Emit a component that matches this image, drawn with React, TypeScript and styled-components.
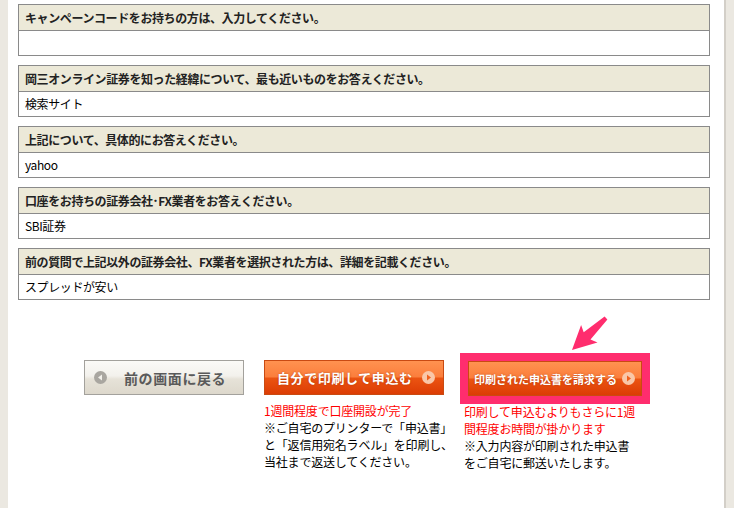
import { FC } from 'react';
import styled, { createGlobalStyle, css } from 'styled-components';

const GlobalStyle = createGlobalStyle`
  html, body {
    margin: 0;
    padding: 0;
    background: #ebe8e1;
  }
  body {
    font-family: "Noto Sans CJK JP", "Liberation Sans", sans-serif;
    font-size: 12px;
    color: #000;
  }
`;

interface IQuestion {
  title: string;
  answer: string;
}

const questions: IQuestion[] = [
  { title: 'キャンペーンコードをお持ちの方は、入力してください。', answer: '' },
  { title: '岡三オンライン証券を知った経緯について、最も近いものをお答えください。', answer: '検索サイト' },
  { title: '上記について、具体的にお答えください。', answer: 'yahoo' },
  { title: '口座をお持ちの証券会社･FX業者をお答えください。', answer: 'SBI証券' },
  { title: '前の質問で上記以外の証券会社、FX業者を選択された方は、詳細を記載ください。', answer: 'スプレッドが安い' },
];

const ArrowIcon: FC<{ dir: 'left' | 'right'; fill: string; tri: string }> = ({ dir, fill, tri }) => (
  <svg width="13" height="13" viewBox="0 0 13 13">
    <circle cx="6.5" cy="6.5" r="6.5" fill={fill} />
    {dir === 'left' ? (
      <polygon points="8,3.5 8,9.5 4,6.5" fill={tri} />
    ) : (
      <polygon points="5,3.5 5,9.5 9,6.5" fill={tri} />
    )}
  </svg>
);

const App: FC = () => (
  <>
    <GlobalStyle />
    <Page>
      <Panel>
        <QuestionList>
          {questions.map((q) => (
            <QuestionBox key={q.title}>
              <QuestionHead>{q.title}</QuestionHead>
              <QuestionBody>{q.answer}</QuestionBody>
            </QuestionBox>
          ))}
        </QuestionList>

        <ButtonRow>
          <Column>
            <BackButton type="button">
              <ArrowIcon dir="left" fill="#a9a6a0" tri="#f2f0ea" />
              <span>前の画面に戻る</span>
            </BackButton>
          </Column>

          <Column>
            <OrangeButton type="button" $size={13}>
              <span>自分で印刷して申込む</span>
              <ArrowIcon dir="right" fill="#f9c7a8" tri="#f0601c" />
            </OrangeButton>
            <Note>
              <Red>1週間程度で口座開設が完了</Red>
              <br />
              ※ご自宅のプリンターで「申込書」
              <br />
              と「返信用宛名ラベル」を印刷し、
              <br />
              当社まで返送してください。
            </Note>
          </Column>

          <Column>
            <Pointer width="47" height="44" viewBox="0 0 47 44">
              <polygon
                points="39.6,5.5 18.7,21.2 16.1,14.1 7,39 32.5,31.5 25.5,28.4 42.4,8.5"
                fill="#ff2d6e"
              />
            </Pointer>
            <OrangeButton type="button" $size={11} $highlight>
              <span>印刷された申込書を請求する</span>
              <ArrowIcon dir="right" fill="#f9c7a8" tri="#f0601c" />
            </OrangeButton>
            <Note>
              <Red>
                印刷して申込むよりもさらに1週
                <br />
                間程度お時間が掛かります
              </Red>
              <br />
              ※入力内容が印刷された申込書
              <br />
              をご自宅に郵送いたします。
            </Note>
          </Column>
        </ButtonRow>
      </Panel>
      <SideStrip />
    </Page>
  </>
);

export default App;

const Page = styled.div`
  display: flex;
  min-height: 100vh;
  padding-left: 8px;
  background: #ebe8e1;
`;

const Panel = styled.div`
  width: 716px;
  background: #fff;
  padding: 4px 14px 0 10px;
  box-sizing: border-box;
`;

const SideStrip = styled.div`
  flex: 1;
  border-left: 2px solid #d3cfc8;
  background: #ebe8e1;
`;

const QuestionList = styled.div`
  display: flex;
  flex-direction: column;
  gap: 9px;
`;

const QuestionBox = styled.div`
  border: 1px solid #8a8a8a;
`;

const rowText = css`
  display: flex;
  align-items: center;
  padding-left: 6px;
  font-size: 12px;
  letter-spacing: -0.4px;
  line-height: 1;
  white-space: nowrap;
`;

const QuestionHead = styled.div`
  ${rowText}
  height: 25px;
  background: #ece9d8;
  border-bottom: 1px solid #8a8a8a;
  font-weight: bold;
  color: #222;
`;

const QuestionBody = styled.div`
  ${rowText}
  height: 24px;
  background: #fff;
`;

const ButtonRow = styled.div`
  display: grid;
  grid-template-columns: 160px 180px 180px;
  column-gap: 20px;
  margin: 60px 0 0 66px;
  padding-bottom: 40px;
`;

const Column = styled.div`
  position: relative;
  display: flex;
  flex-direction: column;
`;

const buttonBase = css`
  display: flex;
  align-items: center;
  height: 35px;
  box-sizing: border-box;
  padding: 0 10px;
  font-family: "Noto Sans CJK JP", "Liberation Sans", sans-serif;
  font-weight: bold;
  white-space: nowrap;
  cursor: pointer;
`;

const BackButton = styled.button`
  ${buttonBase}
  width: 160px;
  gap: 17px;
  padding-left: 9px;
  border: 1px solid #a3a19c;
  background: linear-gradient(#fbfaf7 0%, #f3f1ec 45%, #e6e2d8 55%, #ddd8cc 100%);
  color: #5a5a5a;
  font-size: 14px;
  letter-spacing: 0.6px;
`;

const OrangeButton = styled.button<{ $size: number; $highlight?: boolean }>`
  ${buttonBase}
  justify-content: space-between;
  width: ${(p) => (p.$highlight ? '174px' : '180px')};
  margin-left: ${(p) => (p.$highlight ? '4px' : '0')};
  margin-top: ${(p) => (p.$highlight ? '1px' : '0')};
  padding: 0 8px 0 12px;
  border: 1px solid #c94a12;
  background: linear-gradient(#ff9250 0%, #fb7e3c 48%, #eb5412 52%, #dc3c04 100%);
  color: #fff;
  font-size: ${(p) => p.$size}px;
  letter-spacing: ${(p) => (p.$highlight ? '0' : '0.6px')};
  text-shadow: 0 0 2px rgba(140, 40, 0, 0.6);
  ${(p) =>
    p.$highlight &&
    css`
      padding: 0 6px 0 5px;
      box-shadow: 0 0 0 8px #ff2d6e;
    `}
`;

const Note = styled.p`
  margin: 7px 0 0;
  font-size: 12px;
  line-height: 17px;
  letter-spacing: -0.2px;
  white-space: nowrap;
  color: #000;
`;

const Red = styled.span`
  color: #ff0000;
`;

const Pointer = styled.svg`
  position: absolute;
  top: -49px;
  left: 101px;
`;
